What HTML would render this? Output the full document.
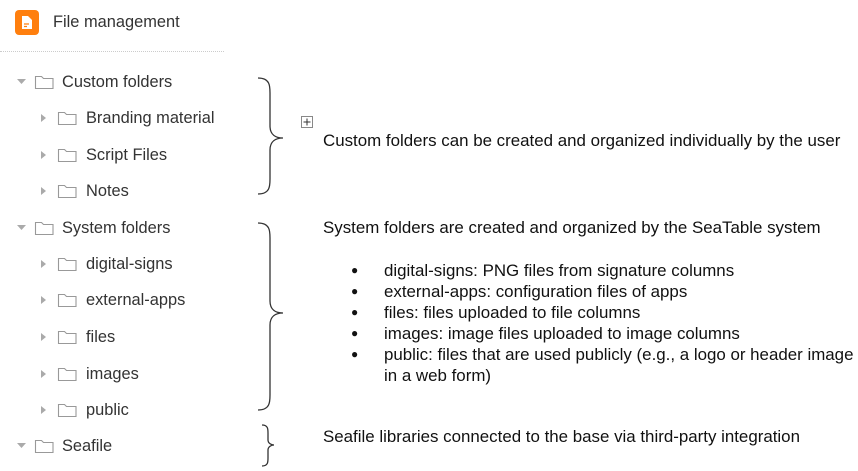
<!DOCTYPE html>
<html><head><meta charset="utf-8"><style>
body{margin:0;width:858px;height:471px;background:#fff;position:relative;overflow:hidden;font-family:"Liberation Sans",Arial,sans-serif}
.t{position:absolute;white-space:nowrap}
.row{position:absolute;font-size:16.4px;color:#333;white-space:nowrap;height:20px;line-height:20px}
.r{position:absolute;font-size:16.9px;color:#111;white-space:nowrap;line-height:21px}
</style></head><body>
<div style="position:absolute;left:15px;top:10px;width:24px;height:25px;background:#ff7f0e;border-radius:4px"></div>
<svg style="position:absolute;left:15px;top:10px" width="24" height="25"><path d="M7 6h6l4 4v9H7z" fill="#fff"/><path d="M9 14h5M9 16.5h3" stroke="#ff7f0e" stroke-width="1.2"/></svg>
<div class="t" style="left:53px;top:12px;font-size:16.4px;color:#333;line-height:20px">File management</div>
<div style="position:absolute;left:0;top:51px;width:224px;border-top:1px dotted #ccc"></div>
<svg style="position:absolute;left:0;top:0" width="240" height="471">
<g fill="#aaa">
<path d="M17 79h9l-4.5 5z"/><path d="M17 225h9l-4.5 5z"/><path d="M17 443h9l-4.5 5z"/>
<path d="M41 114v8l5-4z"/><path d="M41 151v8l5-4z"/><path d="M41 187v8l5-4z"/>
<path d="M41 260v8l5-4z"/><path d="M41 296v8l5-4z"/><path d="M41 333v8l5-4z"/><path d="M41 370v8l5-4z"/><path d="M41 406v8l5-4z"/>
</g>
<g fill="none" stroke="#999" stroke-width="1.1">
<path d="M35.5 76.5h6l2 2h9.5v10h-17.5z"/><path d="M35.5 222.5h6l2 2h9.5v10h-17.5z"/><path d="M35.5 440.5h6l2 2h9.5v10h-17.5z"/>
<path d="M58.5 112.5h6l2 2h9.5v10h-17.5z"/><path d="M58.5 149.5h6l2 2h9.5v10h-17.5z"/><path d="M58.5 185.5h6l2 2h9.5v10h-17.5z"/>
<path d="M58.5 258.5h6l2 2h9.5v10h-17.5z"/><path d="M58.5 294.5h6l2 2h9.5v10h-17.5z"/><path d="M58.5 331.5h6l2 2h9.5v10h-17.5z"/><path d="M58.5 368.5h6l2 2h9.5v10h-17.5z"/><path d="M58.5 404.5h6l2 2h9.5v10h-17.5z"/>
</g></svg>
<div class="row" style="left:62px;top:72px">Custom folders</div>
<div class="row" style="left:86px;top:108px">Branding material</div>
<div class="row" style="left:86px;top:145px">Script Files</div>
<div class="row" style="left:86px;top:181px">Notes</div>
<div class="row" style="left:62px;top:218px">System folders</div>
<div class="row" style="left:86px;top:254px">digital-signs</div>
<div class="row" style="left:86px;top:290px">external-apps</div>
<div class="row" style="left:86px;top:327px">files</div>
<div class="row" style="left:86px;top:364px">images</div>
<div class="row" style="left:86px;top:400px">public</div>
<div class="row" style="left:62px;top:436px">Seafile</div>
<svg style="position:absolute;left:0;top:0" width="858" height="471" fill="none" stroke="#333" stroke-width="1.3">
<path d="M258 78C270 78 270 86 270 93L270 126C270 135 276 138 283 138C276 138 270 141 270 150L270 179C270 186 270 194 258 194"/>
<path d="M258 223C270 223 270 231 270 238L270 301C270 310 276 313 283 313C276 313 270 316 270 325L270 395C270 402 270 410 258 410"/>
<path d="M262 425C268 425 268 429 268 433L268 440C268 443 271 445 274 445C271 445 268 447 268 450L268 458C268 462 268 466 262 466"/>
<rect x="301.5" y="116.5" width="11" height="11" stroke="#888" stroke-width="1"/>
<path d="M307 118.5v7M303.5 122h7" stroke="#333" stroke-width="1"/>
</svg>
<div class="r" style="left:323px;top:130px">Custom folders can be created and organized individually by the user</div>
<div class="r" style="left:323px;top:217px">System folders are created and organized by the SeaTable system</div>
<div class="r" style="left:384px;top:260px">digital-signs: PNG files from signature columns<br>external-apps: configuration files of apps<br>files: files uploaded to file columns<br>images: image files uploaded to image columns<br>public: files that are used publicly (e.g., a logo or header image<br>in a web form)</div>
<div class="r" style="left:351px;top:260px;font-size:12px">●<br>●<br>●<br>●<br>●</div>
<div class="r" style="left:323px;top:426px">Seafile libraries connected to the base via third-party integration</div>
</body></html>
